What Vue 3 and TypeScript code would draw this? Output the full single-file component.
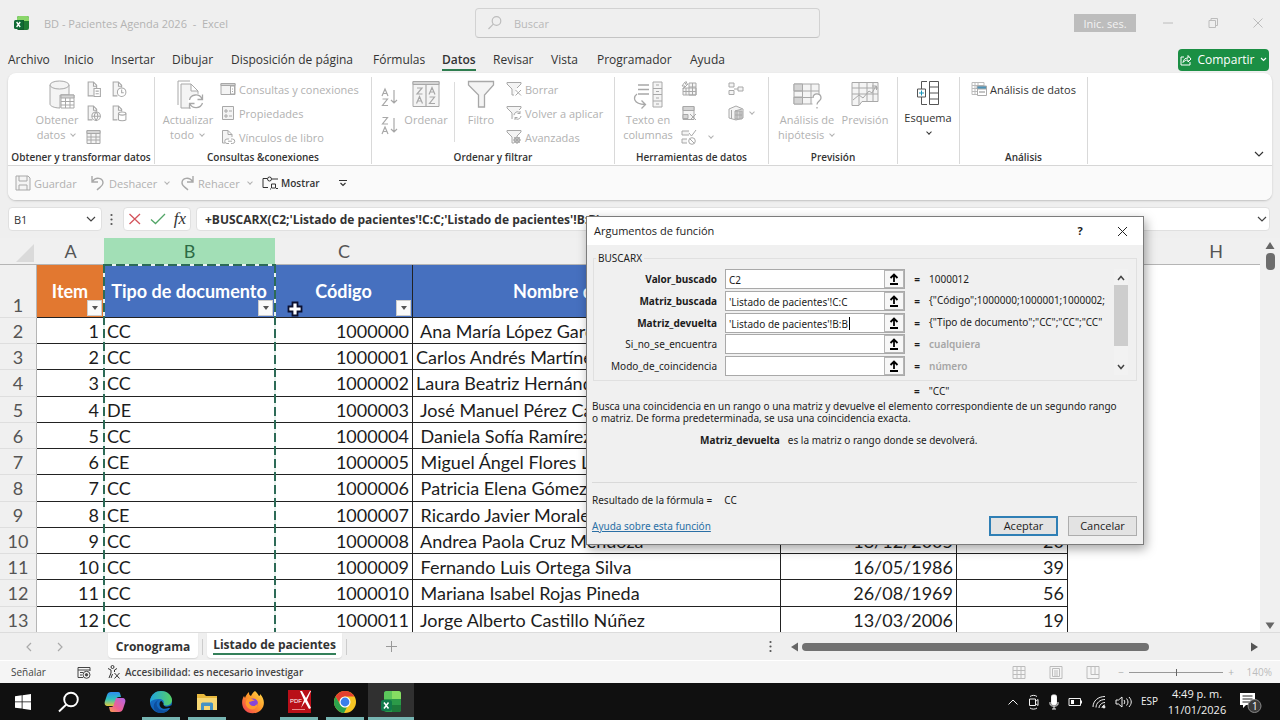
<script setup lang="ts">
import { ref } from 'vue'

interface Patient {
  item: number
  doc: string
  code: number
  name: string
  date: string
  age: string
}

interface Argument {
  id: string
  label: string
  value: string
  result: string
  required: boolean
  hint: boolean
}

const menu = ['Archivo', 'Inicio', 'Insertar', 'Dibujar', 'Disposición de página', 'Fórmulas', 'Datos', 'Revisar', 'Vista', 'Programador', 'Ayuda']
const active = ref('Datos')

const columns = ['A', 'B', 'C', 'D', 'E', 'F', 'G', 'H']

const patients: Patient[] = [
  { item: 1, doc: 'CC', code: 1000000, name: ' Ana María López García', date: '', age: '' },
  { item: 2, doc: 'CC', code: 1000001, name: 'Carlos Andrés Martínez', date: '', age: '' },
  { item: 3, doc: 'CC', code: 1000002, name: 'Laura Beatriz Hernández', date: '', age: '' },
  { item: 4, doc: 'DE', code: 1000003, name: ' José Manuel Pérez Castro', date: '', age: '' },
  { item: 5, doc: 'CC', code: 1000004, name: ' Daniela Sofía Ramírez', date: '', age: '' },
  { item: 6, doc: 'CE', code: 1000005, name: ' Miguel Ángel Flores Luna', date: '', age: '' },
  { item: 7, doc: 'CC', code: 1000006, name: ' Patricia Elena Gómez', date: '', age: '' },
  { item: 8, doc: 'CE', code: 1000007, name: ' Ricardo Javier Morales', date: '', age: '' },
  { item: 9, doc: 'CC', code: 1000008, name: ' Andrea Paola Cruz Mendoza', date: '18/12/2005', age: '20' },
  { item: 10, doc: 'CC', code: 1000009, name: ' Fernando Luis Ortega Silva', date: '16/05/1986', age: '39' },
  { item: 11, doc: 'CC', code: 1000010, name: ' Mariana Isabel Rojas Pineda', date: '26/08/1969', age: '56' },
  { item: 12, doc: 'CC', code: 1000011, name: ' Jorge Alberto Castillo Núñez', date: '13/03/2006', age: '19' },
]

const args = ref<Argument[]>([
  { id: 'arg-valor', label: 'Valor_buscado', value: 'C2', result: '1000012', required: true, hint: false },
  { id: 'arg-buscada', label: 'Matriz_buscada', value: "'Listado de pacientes'!C:C", result: '{"Código";1000000;1000001;1000002;', required: true, hint: false },
  { id: 'arg-devuelta', label: 'Matriz_devuelta', value: "'Listado de pacientes'!B:B", result: '{"Tipo de documento";"CC";"CC";"CC"', required: true, hint: false },
  { id: 'arg-si-no', label: 'Si_no_se_encuentra', value: '', result: 'cualquiera', required: false, hint: true },
  { id: 'arg-modo', label: 'Modo_de_coincidencia', value: '', result: 'número', required: false, hint: true },
])
const current = ref('arg-devuelta')

const cellRef = ref('B1')
const formula = ref("+BUSCARX(C2;'Listado de pacientes'!C:C;'Listado de pacientes'!B:B)")
const zoom = ref(50)
</script>

<template>
  <div class="app">
    <header class="titlebar">
      <div class="doc">
        <svg class="logo" width="16" height="16" viewBox="0 0 16 16">
          <rect x="3" y="1" width="12" height="14" rx="2" fill="#1e7b34" />
          <path d="M5 1h8a2 2 0 0 1 2 2v3H3V3a2 2 0 0 1 2-2z" fill="#8ad66a" />
          <path d="M3 5h7v10H5a2 2 0 0 1-2-2z" fill="#135c2b" />
          <rect x="0" y="5" width="9" height="9" rx="1.5" fill="#0f6b35" />
          <path d="M2.6 7l3.6 5M6.2 7l-3.6 5" stroke="#fff" stroke-width="1.3" />
        </svg>
        <span>BD - Pacientes Agenda 2026&nbsp; -&nbsp; Excel</span>
      </div>
      <label class="search">
        <svg width="16" height="16" viewBox="0 0 16 16" fill="none" stroke="#bdbdbd" stroke-width="1.2">
          <circle cx="9.5" cy="6" r="4.3" /><path d="M6.3 9.2L1.5 14" />
        </svg>
        <input type="text" placeholder="Buscar" aria-label="Buscar" />
      </label>
      <div class="window">
        <button class="signin">Inic. ses.</button>
        <button class="win" aria-label="Minimizar"><svg width="12" height="12" viewBox="0 0 12 12"><path d="M1 6h10" /></svg></button>
        <button class="win" aria-label="Restaurar"><svg width="12" height="12" viewBox="0 0 12 12"><path d="M2 3.500h6.500v7H2zM4 3.500V1.500h6.500v7H8.500" /></svg></button>
        <button class="win" aria-label="Cerrar"><svg width="12" height="12" viewBox="0 0 12 12"><path d="M1.500 1.500l9 9M10.500 1.500l-9 9" /></svg></button>
      </div>
    </header>

    <nav class="menubar">
      <div class="menu">
        <button v-for="m in menu" :key="m" :class="{ on: m === active }" @click="active = m"><span>{{ m }}</span></button>
      </div>
      <button class="share">
        <svg width="12" height="12" viewBox="0 0 12 12" fill="none" stroke="#fff"><path d="M4 3H1v8h9V8M3 8.500c.5-3 2-4.500 5-4.500V1.500L11 5 8 8V6C6 6 4.500 6.500 3 8.500z" /></svg>
        <span>Compartir</span>
        <svg width="7" height="5" viewBox="0 0 7 5" fill="none" stroke="#fff" stroke-width="1.200"><path d="M1 1l2.500 2.500L6 1" /></svg>
      </button>
    </nav>

    <section class="ribbon">
      <div class="groups">
        <div class="group g1">
          <div class="tools">
            <button class="big">
              <svg width="36" height="30" viewBox="-10 0 36 30">
                <path class="f" d="M1 5v19c0 2 4 4 10 4V15h9V5" />
                <ellipse class="f" cx="10.500" cy="5" rx="9.500" ry="4" />
                <path class="w" d="M12 15h13v13H12z" /><path class="d" d="M12 15h13v3H12z" />
                <path class="n" d="M12 21.500h13M12 25h13M16.500 18v10M21 18v10" />
              </svg>
              <span>Obtener<br />datos <i class="chev"></i></span>
            </button>
            <div class="pair">
              <button aria-label="Desde texto"><svg width="16" height="17" viewBox="0 0 15 16"><path class="f" d="M7 14H2V1h5l3 3v3M7 1v4h3" /><path class="w" d="M7.500 7h6v7.500h-6zM9 9.500h3M9 12h3" /></svg></button>
              <button aria-label="Recientes"><svg width="16" height="17" viewBox="0 0 15 16"><path class="f" d="M6 14H2V1h5l3 3v2M7 1v4h3" /><circle class="w" cx="10" cy="10.500" r="4" /><path class="n" d="M10 8v3h2" /></svg></button>
              <button aria-label="Desde web"><svg width="16" height="17" viewBox="0 0 15 16"><path class="f" d="M6 14H2V1h5l3 3v2M7 1v4h3" /><circle class="w" cx="9.500" cy="10.500" r="4" /><path class="n" d="M5.500 10.500h8M9.500 6.500c-2.500 3-2.500 5 0 8c2.500-3 2.500-5 0-8" /></svg></button>
              <button aria-label="Conexiones existentes"><svg width="16" height="17" viewBox="0 0 15 16"><path class="f" d="M6 14H2V1h5l3 3v2M7 1v4h3" /><path class="w" d="M7 8v6c1 1 6 1 7 0V8" /><ellipse class="w" cx="10.500" cy="8" rx="3.500" ry="1.500" /></svg></button>
              <button aria-label="Desde tabla"><svg width="16" height="16" viewBox="0 0 16 16"><path class="f" d="M1 1.500h13v13H1z" /><path class="d" d="M1 1.500h13v3H1z" /><path class="n" d="M1 8h13M1 11h13M5 4v10M10 4v10" /></svg></button>
            </div>
          </div>
          <h2>Obtener y transformar datos</h2>
        </div>
        <div class="group g2">
          <div class="tools">
            <button class="big">
              <svg width="32" height="30" viewBox="-4 0 32 30">
                <path class="n" d="M2 25V1h12" /><path class="f" d="M15 28H5V4h10l7 7v3M15 4v7h7" />
                <circle cx="20" cy="21.500" r="8" fill="#fff" stroke="none" />
                <path class="n" stroke-width="1.300" d="M13.500 20c1-6 10-7 12.500-1M26.500 14.500V19.500h-5M26.500 23c-2 6-10 6-12.500 1M13.500 28.500v-5h5" />
              </svg>
              <span>Actualizar<br />todo <i class="chev"></i></span>
            </button>
            <div class="stack">
              <button><svg width="16" height="16" viewBox="0 0 16 16"><path class="f" d="M1 2.500h14v11H1z" /><path class="d" d="M1 2.500h14v2H1z" /><path class="w" d="M10.500 5h4v8h-4zM12 8h1M12 10.500h1" /></svg>Consultas y conexiones</button>
              <button><svg width="16" height="16" viewBox="0 0 16 16"><path class="f" d="M2.500 1.500h11v13h-11z" /><path class="n" d="M5 5h2v2H5zM5 10h2v2H5zM9 6h3M9 11h3" /></svg>Propiedades</button>
              <button><svg width="16" height="16" viewBox="0 0 16 16"><path class="f" d="M5 14H2.500V1.500H8l4 4V8M8 1.500v4h4" /><path class="w" d="M9 10H7a2 2 0 0 0 0 4.500h2M11 10h1.500a2 2 0 0 1 0 4.500H11M8 12.200h4" /></svg>Vínculos de libro</button>
            </div>
          </div>
          <h2>Consultas &amp;conexiones</h2>
        </div>
        <div class="group g3">
          <div class="tools">
            <div class="sorts">
              <button aria-label="Ordenar de A a Z"><svg width="18" height="20" viewBox="0 0 18 20"><path class="n" stroke-width="1.200" d="M1 9l3-7 3 7M2 6.500h4M1.500 12h5l-5 6.500h5.500M13 3v13M10 13l3 3 3-3" /></svg></button>
              <button aria-label="Ordenar de Z a A"><svg width="18" height="20" viewBox="0 0 18 20"><path class="n" stroke-width="1.200" d="M1.500 1.500h5l-5 6.500h5.500M1 18l3-7 3 7M2 15.500h4M13 2v14M10 13l3 3 3-3" /></svg></button>
            </div>
            <button class="big">
              <svg width="28" height="30" viewBox="0 0 28 30"><path class="f" d="M1 1.500h26v25H1z" /><path class="d" d="M1 1.500h26v3H1z" /><path class="n" stroke-width="1.200" d="M14 5v21M5 8h5l-5 6h5.500M4.500 23.500l3-7 3 7M5.500 21h4M17 14.500l3-7 3 7M18 12h4M17.500 17h5l-5 6.500h5.500" /></svg>
              <span>Ordenar</span>
            </button>
            <div class="rule"></div>
            <button class="big">
              <svg width="28" height="30" viewBox="0 0 28 30"><path class="f" stroke-width="1.300" d="M1.500 1.500h25v3.500L17.500 15v12h-6V15L1.500 5z" /></svg>
              <span>Filtro</span>
            </button>
            <div class="stack">
              <button><svg width="16" height="16" viewBox="0 0 16 16"><path class="f" d="M8 14H6V8L1 3V1.500h14V3l-4 4" /><path class="n" d="M9.500 9l5.500 5.500M15 9l-5.500 5.500" /></svg>Borrar</button>
              <button><svg width="16" height="16" viewBox="0 0 16 16"><path class="f" d="M6 14V8L1 3V1.500h14V3l-2 2" /><path class="n" d="M8 10c1-4 5-4 6-1.500V6M14 8.500h-2.500M15 11c-1 4-5 4-6 1.500V15M9 12.500h2.500" /></svg>Volver a aplicar</button>
              <button><svg width="16" height="16" viewBox="0 0 16 16"><path class="f" d="M8 14H6V8L1 3V1.500h14V3l-4 4" /><circle class="d" cx="11" cy="11" r="2.800" /><path class="n" d="M11 7v8M7 11h8M8.200 8.200l5.600 5.600M13.800 8.200l-5.600 5.600" /></svg>Avanzadas</button>
            </div>
          </div>
          <h2>Ordenar y filtrar</h2>
        </div>
        <div class="group g4">
          <div class="tools">
            <button class="big">
              <svg width="30" height="30" viewBox="0 0 30 30"><path class="n" stroke-width="1.300" d="M5 5h11M5 9.500h11M5 14h11M4 14c-4 3-4 10 8 10.500M8.500 20.500l4 4-4 4" /><path class="f" d="M20 2h9v25h-9zM20 8.500h9M20 14.500h9M20 21h9M23 5h3M23 11.500h3M23 18h3M23 24h3" /></svg>
              <span>Texto en<br />columnas</span>
            </button>
            <div class="stack icons">
              <button aria-label="Relleno rápido"><svg width="16" height="16" viewBox="0 0 16 16"><path class="f" d="M2 7h13v7H2zM8 2h7v12H8z" /><path class="n" d="M2 10.500h13M8 6h7M11.500 2v12M5 7v7M4 1L1 5h3L2 8l5-5H4l2-2z" /></svg></button>
              <button aria-label="Quitar duplicados"><svg width="16" height="16" viewBox="0 0 16 16"><path class="f" d="M2 1.500h11v13H2z" /><path class="d" d="M2 1.500h11v4H2zM2 9.500h5v4H2z" /><path class="w" d="M9 9l6 6M15 9l-6 6" /></svg></button>
              <button aria-label="Validación de datos"><svg width="16" height="16" viewBox="0 0 16 16"><path class="f" d="M6 14H1v-4h5M8 6H1V2h7" /><path class="n" d="M8 4l2.500 3L15 1" /><circle class="w" cx="11" cy="12" r="3.300" /><path class="n" d="M9 10l4 4" /></svg><i class="chev far"></i></button>
            </div>
            <div class="stack icons last">
              <button aria-label="Consolidar"><svg width="16" height="16" viewBox="0 0 16 16"><path class="f" d="M1 2h5v4H1zM1 9.500h5v4H1zM10 6h5v4h-5zM6 8h4" /></svg></button>
              <button aria-label="Modelo de datos"><svg width="16" height="16" viewBox="0 0 16 16"><path class="f" d="M1 4l7-3 7 3v9l-7 2-7-2z" /><path class="d" d="M7 6h7v8H7z" /><path class="n" d="M3.500 5v9M7 6l7-2M9 6v8M12 6v8M7 10h7" /></svg><i class="chev"></i></button>
            </div>
          </div>
          <h2>Herramientas de datos</h2>
        </div>
        <div class="group g5">
          <div class="tools">
            <button class="big">
              <svg width="30" height="30" viewBox="0 0 30 30"><path class="f" d="M2 4h25v20H2z" /><path class="d" d="M2 4h8.500v7H2zM2 17h8.500v7H2z" /><path class="n" d="M2 11h25M2 17.500h25M10.500 4v20M19 4v20" /><path d="M20.500 15h9v14h-9z" fill="#fff" stroke="none" /><path class="n" stroke-width="1.300" d="M21 18c0-6 8-5 8 0 0 3-4 3-4 6.500M25 27v1.500" /></svg>
              <span>Análisis de<br />hipótesis <i class="chev"></i></span>
            </button>
            <button class="big">
              <svg width="30" height="30" viewBox="0 0 30 30"><path class="f" d="M2 2.500h26v19H12l-3 4H2z" /><path class="n" d="M2 8h26M2 14h26M9 2v23M17 2v19M23 2v19M3 20l6-5 4 3 6-7 3 2 4-7M22 6h4.500v4" /></svg>
              <span>Previsión</span>
            </button>
          </div>
          <h2>Previsión</h2>
        </div>
        <div class="group g6 live">
          <div class="tools">
            <button class="big">
              <svg width="28" height="28" viewBox="0 0 28 28"><path class="w" d="M15.500 1.500h9v23h-9zM15.500 7h9M15.500 13h9M15.500 19h9M13 1.500H7.500V9M13 24.500H7.500V17" /><path d="M3.500 9h8v8h-8z" fill="#fff" stroke="#555" /><path d="M5 13h5M7.500 10.500v5" class="teal" /></svg>
              <span>Esquema<br /><i class="chev"></i></span>
            </button>
          </div>
        </div>
        <div class="group g7 live">
          <div class="tools">
            <div class="stack">
              <button><svg width="16" height="16" viewBox="0 0 16 16"><path d="M1 1.500h12v12H1zM1 4.500h12M1 7.500h12M1 10.500h12M4 1.500v12M7 1.500v12" fill="none" stroke="#bbb" /><path d="M6.500 6h9v8.500h-9z" fill="#fff" stroke="#aaa" /><path d="M6 5h9.500v3H6z" fill="#4d93b8" /><path d="M8 11h6" stroke="#888" /></svg>Análisis de datos</button>
            </div>
          </div>
          <h2>Análisis</h2>
        </div>
        <button class="collapse" aria-label="Contraer la cinta"><svg class="dark" width="10" height="6" viewBox="0 0 10 6"><path d="M1 1l4 4 4-4" stroke-width="1.200" /></svg></button>
      </div>
      <div class="quick">
        <button class="q1"><svg width="16" height="16" viewBox="0 0 16 16"><path class="f" d="M1 1h12l2 2v12H1z" /><path class="n" d="M4 1v5h8V1M4 15v-5h8v5" /></svg>Guardar</button>
        <button class="q2"><svg width="16" height="16" viewBox="0 0 16 16"><path class="n" stroke-width="1.400" d="M2 1v6h6M2 7c4-6 11-4 11 1 0 3-3 4-6 7" /></svg>Deshacer <i class="chev"></i></button>
        <button class="q3"><svg width="16" height="16" viewBox="0 0 16 16"><path class="n" stroke-width="1.400" d="M14 1v6H8M14 7C10 1 3 3 3 8c0 3 3 4 6 7" /></svg>Rehacer <i class="chev"></i></button>
        <button class="q4"><svg class="dark" width="16" height="14" viewBox="0 0 16 14"><path d="M5 2.500H1v9h5M10 3h6M8 13h1M14 12.500h2" /><circle cx="7.500" cy="3" r="2" /><path d="M9.500 8h4v4h-4z" /></svg>Mostrar</button>
        <button class="q5" aria-label="Personalizar"><svg class="dark" width="8" height="7" viewBox="0 0 8 7"><path d="M0 .5h8M1.500 3L4 5.500 6.500 3" stroke-width="1.200" /></svg></button>
      </div>
    </section>

    <section class="formulabar">
      <div class="box namebox">
        <input v-model="cellRef" type="text" aria-label="Cuadro de nombres" />
        <svg width="10" height="6" viewBox="0 0 10 6"><path d="M1 1l4 4 4-4" fill="none" stroke="#444" stroke-width="1.200" /></svg>
      </div>
      <svg class="grip" width="3" height="13" viewBox="0 0 3 13" fill="#555"><circle cx="1.500" cy="2" r="1.100" /><circle cx="1.500" cy="6.500" r="1.100" /><circle cx="1.500" cy="11" r="1.100" /></svg>
      <div class="box marks">
        <button aria-label="Cancelar edición"><svg width="14" height="12" viewBox="0 0 14 12"><path d="M1.500 1l10.500 10M12 1L1.500 11" fill="none" stroke="#d4545c" stroke-width="1.300" /></svg></button>
        <button aria-label="Introducir"><svg width="16" height="12" viewBox="0 0 16 12"><path d="M1 6.500l4.500 4L15 1" fill="none" stroke="#52a567" stroke-width="1.300" /></svg></button>
        <button class="fx" aria-label="Insertar función">fx</button>
      </div>
      <div class="box formula">
        <input v-model="formula" type="text" aria-label="Barra de fórmulas" />
        <svg width="10" height="6" viewBox="0 0 10 6"><path d="M1 1l4 4 4-4" fill="none" stroke="#444" stroke-width="1.200" /></svg>
      </div>
    </section>

    <main class="gridarea">
      <div class="sheet">
        <table>
          <colgroup>
            <col class="c0" /><col class="ca" /><col class="cb" /><col class="cc" /><col class="cd" /><col class="ce" /><col class="cf" /><col class="cg" /><col class="ch" />
          </colgroup>
          <thead>
            <tr>
              <th class="corner"><svg width="18" height="18" viewBox="0 0 18 18"><path d="M18 0v18H0z" fill="#dadada" /></svg></th>
              <th v-for="c in columns" :key="c" :class="{ sel: c === 'B' }">{{ c }}</th>
            </tr>
          </thead>
          <tbody>
            <tr class="titles">
              <th>1</th>
              <td class="orange"><div>Item<button class="filter" aria-label="Filtrar Item"></button></div></td>
              <td><div>Tipo de documento<button class="filter" aria-label="Filtrar Tipo de documento"></button></div></td>
              <td><div>Código<button class="filter" aria-label="Filtrar Código"></button></div></td>
              <td><div>Nombre del paciente</div></td>
              <td></td>
              <td></td>
              <td class="void"></td>
              <td class="void"></td>
            </tr>
            <tr v-for="p in patients" :key="p.item" class="row">
              <th>{{ p.item + 1 }}</th>
              <td class="num item">{{ p.item }}</td>
              <td>{{ p.doc }}</td>
              <td class="num">{{ p.code }}</td>
              <td>{{ p.name }}</td>
              <td class="num">{{ p.date }}</td>
              <td class="num">{{ p.age }}</td>
              <td class="void"></td>
              <td class="void"></td>
            </tr>
          </tbody>
        </table>
        <div class="ants"></div>
        <svg class="cursor" width="16" height="16" viewBox="0 0 16 16"><path d="M5.500 1.500h5v4h4v5h-4v4h-5v-4h-4v-5h4z" fill="#fff" stroke="#0b1030" stroke-width="1.800" /></svg>
      </div>
      <div class="vscroll">
        <svg width="10" height="8" viewBox="0 0 10 8"><path d="M5 0l4.500 7h-9z" fill="#666" /></svg>
        <div class="vthumb"></div>
        <svg width="10" height="8" viewBox="0 0 10 8"><path d="M5 7l4.500-6.500h-9z" fill="#666" /></svg>
      </div>
    </main>

    <section class="sheetbar">
      <button class="arrow" aria-label="Hoja anterior"><svg width="6" height="10" viewBox="0 0 6 10"><path d="M5 1L1 5l4 4" /></svg></button>
      <button class="arrow" aria-label="Hoja siguiente"><svg width="6" height="10" viewBox="0 0 6 10"><path d="M1 1l4 4-4 4" /></svg></button>
      <button class="tab">Cronograma</button>
      <i class="sep"></i>
      <button class="tab current"><span>Listado de pacientes</span></button>
      <i class="sep"></i>
      <button class="plus" aria-label="Hoja nueva"><svg width="11" height="11" viewBox="0 0 11 11"><path d="M0 5.500h11M5.500 0v11" stroke="#999" /></svg></button>
      <svg class="grip hgrip" width="3" height="13" viewBox="0 0 3 13" fill="#555"><circle cx="1.500" cy="2" r="1.100" /><circle cx="1.500" cy="6.500" r="1.100" /><circle cx="1.500" cy="11" r="1.100" /></svg>
      <div class="hscroll">
        <svg width="7" height="10" viewBox="0 0 7 10"><path d="M7 .5v9L0 5z" fill="#666" /></svg>
        <div class="track"><div class="hthumb"></div></div>
        <svg width="7" height="10" viewBox="0 0 7 10"><path d="M0 .5v9L7 5z" fill="#555" /></svg>
      </div>
    </section>

    <footer class="status">
      <span class="mode">Señalar</span>
      <svg class="macro" width="14" height="13" viewBox="0 0 14 13" fill="none" stroke="#444"><path d="M6 11.500H1v-10h12V5M1 4h12M3 6.500h3M3 9h2" /><circle cx="9.500" cy="8.800" r="3.500" /><circle cx="9.500" cy="8.800" r="1.200" fill="#444" /></svg>
      <svg width="14" height="14" viewBox="0 0 14 14" fill="none" stroke="#333"><circle cx="5.500" cy="2" r="1.500" /><path d="M1 3.500l3 1.500v3L2 13M10 3.500L7.500 5v2M5.500 9L4 13M7.500 8l5 5.500M12.500 8l-5 5.500" /></svg>
      <b>Accesibilidad: es necesario investigar</b>
      <div class="views">
        <svg width="14" height="13" viewBox="0 0 14 13"><path d="M1 .5h12v12H1zM1 4.500h12M1 8.500h12M5 .5v12M9 .5v12" /></svg>
        <svg width="14" height="13" viewBox="0 0 14 13"><path d="M1 .5h12v12H1zM3.500 2.500h7v8h-7zM5 5h4M5 7h4M5 9h4" /></svg>
        <svg width="14" height="13" viewBox="0 0 14 13"><path d="M1 .5h12v12H1zM5 .5v8h4v-8M9 8.500h4" /></svg>
      </div>
      <span class="pm">−</span>
      <input v-model="zoom" class="zoom" type="range" min="0" max="100" aria-label="Zoom" />
      <span class="pm">+</span>
      <span class="pct">140%</span>
    </footer>

    <footer class="taskbar">
      <button aria-label="Inicio"><svg width="16" height="16" viewBox="0 0 16 16" fill="#fff"><path d="M0 2.200L6.700 1.300V7.500H0zM7.500 1.200L16 0v7.500H7.500zM0 8.300h6.700v6.300L0 13.700zM7.500 8.300H16V16l-8.500-1.200z" /></svg></button>
      <button aria-label="Buscar en Windows"><svg width="22" height="22" viewBox="0 0 22 22" fill="none" stroke="#fff" stroke-width="1.900"><circle cx="13" cy="8.500" r="6.800" /><path d="M8.300 13.500L1 20.500" /></svg></button>
      <button aria-label="Copilot">
        <svg width="22" height="22" viewBox="0 0 22 22">
          <defs>
            <linearGradient id="cpa" x1="0" y1="0" x2="0" y2="1"><stop offset="0" stop-color="#2f8cf0" /><stop offset=".5" stop-color="#2cc3c0" /><stop offset="1" stop-color="#e3c83c" /></linearGradient>
            <linearGradient id="cpb" x1="1" y1="0" x2="0" y2="1"><stop offset="0" stop-color="#b065e8" /><stop offset=".6" stop-color="#ef5f92" /><stop offset="1" stop-color="#f6a24a" /></linearGradient>
          </defs>
          <path d="M7 1h7c2 0 2 1 2.500 3l.5 2h-2c-2 0-2.500 1-3 3l-2 6H4c-3 0-4-2-3-5l2-6c.6-2 2-3 4-3z" fill="url(#cpa)" />
          <path d="M15 21H8c-2 0-2-1-2.500-3L5 16h2c2 0 2.500-1 3-3l2-6h6c3 0 4 2 3 5l-2 6c-.6 2-2 3-4 3z" fill="url(#cpb)" />
        </svg>
      </button>
      <button class="open" aria-label="Edge">
        <svg width="24" height="24" viewBox="0 0 24 24">
          <defs><linearGradient id="eg" x1="0" y1="0" x2="1" y2="0"><stop offset="0" stop-color="#1fa3e0" /><stop offset="1" stop-color="#57d163" /></linearGradient></defs>
          <circle cx="12" cy="12" r="11" fill="#1469c0" />
          <path d="M1 11C2 4 7 1 12 1c7 0 11 5 11 9 0 4-3 5.500-6 5.500-2.500 0-3-1-2.500-2 1-2-.5-4.500-4-4.500C6 9 2 10 1 13z" fill="url(#eg)" />
          <path d="M10.500 9.500C8 11 7 13 8 16c1.500 4 6 5.500 11.500 3.500C17 22.500 13 24 9 22.500 3 20 3 12 10.500 9.500z" fill="#0d4f9e" />
          <path d="M14.500 13.500c-1 3 4 4.500 8 1.500l1 3h-4c-5 2-9 0-9-4 0-2 1-3 2-3z" fill="#101010" />
        </svg>
      </button>
      <button class="open" aria-label="Explorador">
        <svg width="22" height="20" viewBox="0 0 22 20"><path d="M1 2h7l2 2h11v14H1z" fill="#e9b93d" /><path d="M1 6h20v12H1z" fill="#f7d774" /><path d="M5 18v-6c0-1 1-1.500 2-1.500h8c1 0 2 .5 2 1.500v6h-3v-4H8v4z" fill="#4592c4" /></svg>
      </button>
      <button aria-label="Firefox">
        <svg width="24" height="24" viewBox="0 0 24 24">
          <defs><linearGradient id="ff" x1="1" y1="0" x2="0" y2="1"><stop offset="0" stop-color="#ffe14a" /><stop offset=".5" stop-color="#ff9328" /><stop offset="1" stop-color="#f0325c" /></linearGradient></defs>
          <path d="M14 1c2 2 3 3 4 5 1 0 1-1 1-2 5 5 5 12 1 16-5 5-14 4-17-1C0 14 1 9 3 6l1 2c1-3 2-4 4-6 0 2 0 3 2 4 1-2 2-4 4-5z" fill="url(#ff)" />
          <circle cx="12" cy="13.500" r="5" fill="#8846d8" /><path d="M6 9c3-1 6 0 8 2-3-1-4 1-6 1 0 4 6 6 9 1 0 6-6 8-10 5-3-3-3-6-1-9z" fill="#ff9a2c" />
        </svg>
      </button>
      <button class="open" aria-label="PDF-XChange">
        <svg width="23" height="23" viewBox="0 0 23 23"><path d="M0 0h23v23H0z" fill="#b90f18" /><path d="M12 1h2l4 7 4-7h1l-4 9 4 8-2 1-4-7-4 6 3-8z" fill="#fff" /><text x="2" y="13" font-size="6" fill="#fff" font-family="Liberation Sans, sans-serif">PDF</text><path d="M4 19.500h13" stroke="#e98a8a" /></svg>
      </button>
      <button class="open" aria-label="Chrome">
        <svg width="24" height="24" viewBox="0 0 24 24"><circle cx="12" cy="12" r="11" fill="#f6c623" /><path d="M2.500 6.500A11 11 0 0 1 21.500 6.500H12a5.500 5.500 0 0 0-4.800 8z" fill="#e3402f" /><path d="M2.500 6.500l4.800 8.300A5.500 5.500 0 0 0 14 17l-3 6A11 11 0 0 1 2.500 6.500z" fill="#2ba24c" /><circle cx="12" cy="12" r="5.500" fill="#fff" /><circle cx="12" cy="12" r="4.400" fill="#3c7fea" /></svg>
      </button>
      <button class="open here" aria-label="Excel">
        <svg width="22" height="22" viewBox="0 0 22 22"><rect x="4" y="0" width="17" height="21" rx="2.500" fill="#2b9a48" /><path d="M6.500 0H12v8H4V2.500A2.500 2.500 0 0 1 6.500 0z" fill="#5cc65b" /><path d="M12 0h6.500A2.500 2.500 0 0 1 21 2.500V8h-9z" fill="#86dd62" /><path d="M12 14h9v4.500a2.500 2.500 0 0 1-2.500 2.500H12z" fill="#1d7a3a" /><rect x="1" y="9" width="11" height="11" rx="2" fill="#117a4b" /><path d="M4 11.500l4.500 6M8.500 11.500l-4.500 6" stroke="#fff" stroke-width="1.500" /></svg>
      </button>
      <div class="tray">
        <svg width="12" height="8" viewBox="0 0 12 8"><path d="M1.500 6.500L6 2l4.500 4.500" /></svg>
        <svg width="12" height="16" viewBox="0 0 12 16"><path d="M1.500 5h6v6.500h-6zM7.500 7.500l2.500-2v6l-2.500-2M2 2.500c2-1.500 5-1.500 7 0M2 14c2 1.500 5 1.500 7 0" /></svg>
        <svg width="10" height="16" viewBox="0 0 10 16"><rect x="2.500" y="1" width="5" height="10" rx="1.500" fill="#fff" /><path d="M1 8v2c0 3 8 3 8 0V8M5 12.500V15M3 15h4" /></svg>
        <svg width="15" height="10" viewBox="0 0 15 10"><path d="M1 1.500h11.500v7H1zM13.500 3.500v3" /><path d="M3 3h3v4H3z" fill="#fff" stroke="none" /></svg>
        <svg width="14" height="14" viewBox="0 0 14 14"><path d="M1 12C1 6 6 1.500 13 1.500M4 12.500C4 8 8 4.500 13 4.500M7 13c0-3 3-5.500 6-5.500M10 13c0-1.500 1.500-3 3-3" /><circle cx="12" cy="12" r="1" fill="#fff" /></svg>
        <svg width="17" height="14" viewBox="0 0 17 14"><path d="M1 5h2.500l3.500-3v10L3.500 9H1zM9 5c1 1.500 1 2.500 0 4M11.500 3.500c2 2.500 2 4.500 0 7M14 2c3 3.500 3 6.500 0 10" /></svg>
        <span>ESP</span>
        <span class="clock">4:49 p. m.<br />11/01/2026</span>
        <svg width="24" height="24" viewBox="0 0 24 24"><path d="M2 3h15v12h-9l-3 3v-3H2z" fill="#fff" stroke="none" /><path d="M4.500 6h10M4.500 9h10M4.500 12h7" stroke="#222" /><circle cx="16.500" cy="16" r="6.500" fill="#3b3b3b" stroke="#888" /><text x="14" y="20" font-size="10" fill="#fff" stroke="none" font-family="Open Sans, sans-serif">1</text></svg>
      </div>
    </footer>

    <div class="dialog" role="dialog" aria-labelledby="dlg-title">
      <div class="dlg-title">
        <span id="dlg-title">Argumentos de función</span>
        <button aria-label="Ayuda"><b>?</b></button>
        <button aria-label="Cerrar cuadro"><svg width="11" height="11" viewBox="0 0 11 11"><path d="M1 1l9 9M10 1l-9 9" stroke="#222" /></svg></button>
      </div>
      <fieldset>
        <legend>BUSCARX</legend>
        <div class="args">
          <div v-for="a in args" :key="a.id" class="arg">
            <label :for="a.id" :class="{ req: a.required }">{{ a.label }}</label>
            <div class="field">
              <input :id="a.id" v-model="a.value" type="text" @focus="current = a.id" />
              <i v-if="a.id === current" class="caret"></i>
              <button :aria-label="'Contraer ' + a.label"><svg width="10" height="12" viewBox="0 0 10 12"><path d="M5 9V2M1.500 5L5 1.500 8.500 5M1 11h8" fill="none" stroke="#000" stroke-width="1.800" /></svg></button>
            </div>
            <b>=</b>
            <span class="res" :class="{ hint: a.hint }">{{ a.result }}</span>
          </div>
        </div>
        <div class="dscroll">
          <svg width="8" height="6" viewBox="0 0 8 6"><path d="M1 5l3-3.500L7 5" /></svg>
          <div class="dthumb"></div>
          <svg width="8" height="6" viewBox="0 0 8 6"><path d="M1 1l3 3.500L7 1" /></svg>
        </div>
      </fieldset>
      <div class="outcome"><b>=</b><span>"CC"</span></div>
      <p class="desc">Busca una coincidencia en un rango o una matriz y devuelve el elemento correspondiente de un segundo rango o&nbsp;matriz. De forma predeterminada, se usa una coincidencia exacta.</p>
      <p class="argdesc"><b>Matriz_devuelta</b><span>es la matriz o rango donde se devolverá.</span></p>
      <div class="dlg-foot">
        <p>Resultado de la fórmula =<span>CC</span></p>
        <div class="actions">
          <a href="#">Ayuda sobre esta función</a>
          <button class="primary">Aceptar</button>
          <button>Cancelar</button>
        </div>
      </div>
    </div>
  </div>
</template>

<style>
body { margin: 0; background: #f0f0f0; }
</style>

<style scoped>
* { box-sizing: border-box; }
.app { position: relative; display: flex; flex-direction: column; height: 100vh; overflow: hidden; background: #efefef; color: #333; font-family: "Open Sans", "Noto Sans", sans-serif; font-size: 12px; line-height: 15px; }
button { margin: 0; padding: 0; border: 0; background: none; font: inherit; color: inherit; white-space: nowrap; }
input { min-width: 0; margin: 0; padding: 0; border: 0; outline: 0; background: none; font: inherit; color: inherit; }
svg { flex: none; display: block; }
p, h2 { margin: 0; }

.titlebar { display: grid; grid-template-columns: minmax(0, 475fr) 345px minmax(0, 460fr); align-items: center; height: 46px; flex: none; color: #b3b3b3; }
.doc { display: flex; align-items: center; gap: 14px; padding-left: 14px; font-size: 11px; }
.search { display: flex; align-items: center; gap: 11px; height: 30px; padding: 0 11px; border: 1px solid #d2d2d2; border-bottom-color: #c4c4c4; border-radius: 4px; }
.search input { flex: 1; font-size: 11px; }
.search input::placeholder { color: #b9b9b9; opacity: 1; }
.window { display: flex; align-items: center; justify-content: flex-end; }
.signin { width: 62px; height: 18px; margin-right: 9px; background: #bdbdbd; color: #f3f3f3; font-size: 11px; }
.win { display: grid; place-items: center; width: 45px; height: 30px; }
.win svg { fill: none; stroke: #bcbcbc; }

.menubar { display: flex; align-items: center; justify-content: space-between; height: 27px; padding: 0 11px 0 8px; flex: none; }
.menu { display: grid; grid-template-columns: 56px 47px 61px 59px 142px 69px 51px 58px 46px 93px 50px; }
.menu button { text-align: left; height: 24px; }
.menu span { display: inline-block; height: 22px; line-height: 22px; border-bottom: 2px solid transparent; }
.menu .on span { border-color: #2e7d4f; font-weight: 600; }
.share { display: flex; align-items: center; justify-content: center; gap: 5px; width: 91px; height: 22px; border-radius: 4px; background: #1b8f44; color: #fff; }

.ribbon { flex: none; margin: 0 8px; border-radius: 8px; background: #fff; box-shadow: 0 1px 2px #c0c0c0; overflow: hidden; color: #b1b1b1; font-size: 11px; }
.ribbon svg { stroke: #a8a8a8; fill: none; }
.ribbon svg.dark { stroke: #333; }
.ribbon .f { fill: #f4f4f4; }
.ribbon .w { fill: #fff; }
.ribbon .d { fill: #d4d4d4; }
.groups { display: flex; height: 93px; border-bottom: 1px solid #d6d6d6; }
.group { display: flex; flex-direction: column; justify-content: space-between; flex: none; margin: 4px 0 1px; border-right: 1px solid #d9d9d9; }
.g1 { width: 147px; } .g2 { width: 217px; } .g3 { width: 243px; } .g4 { width: 154px; } .g5 { width: 129px; } .g6 { width: 62px; } .g7 { width: 128px; }
.live { color: #333; }
.ribbon .g6 svg { stroke: #555; }
.ribbon .teal { stroke: #1593b8; }
.tools { display: flex; height: 72px; }
.group h2 { color: #333; font-size: 10px; font-weight: 600; line-height: 14px; text-align: center; white-space: nowrap; }
.big { display: flex; flex-direction: column; align-items: center; gap: 2px; width: 52px; padding-top: 3px; }
.chev { display: inline-block; width: 4px; height: 4px; margin: 0 2px 3px 3px; border-right: 1px solid currentColor; border-bottom: 1px solid currentColor; transform: rotate(45deg); }
.g1 .tools { padding-left: 23px; }
.pair { display: grid; grid-template-columns: 25px 25px; grid-auto-rows: 24px; margin-left: 3px; }
.pair button { display: flex; align-items: center; }
.stack { display: grid; grid-auto-rows: 24px; }
.stack button { display: flex; align-items: center; gap: 3px; }
.g2 .tools { padding-left: 7px; gap: 6px; }
.g3 .tools { padding-left: 9px; }
.sorts { display: grid; grid-auto-rows: 29px; align-content: start; padding-top: 5px; margin-right: 1px; }
.rule { width: 1px; height: 60px; margin: 5px 0 0 2px; background: #dcdcdc; }
.g3 .stack { margin-left: -1px; }
.g4 .tools { padding-left: 7px; }
.g4 .stack { width: 47px; }
.g4 .icons { margin-left: 7px; }
.g4 .last { margin-left: 0; width: 32px; }
.far { margin-left: 9px; }
.g5 .tools { padding-left: 8px; }
.g5 .big { width: 60px; }
.g5 .big + .big { width: 56px; }
.g6 .tools { padding-left: 4px; }
.g7 .tools { padding-left: 11px; }
.collapse { margin: auto 8px 8px auto; }
.quick { display: flex; align-items: center; height: 34px; padding-left: 7px; background: #fafafa; }
.quick button { display: flex; align-items: center; gap: 3px; }
.q1 { width: 75px; } .q2 { width: 89px; } .q3 { width: 83px; } .quick .q4 { width: 77px; color: #333; font-size: 10px; font-weight: 600; }
.quick .chev { margin-left: 5px; }

.formulabar { display: flex; align-items: center; height: 38px; flex: none; padding: 0 10px 0 8px; }
.box { display: flex; align-items: center; height: 24px; border: 1px solid #e0e0e0; border-radius: 4px; background: #fff; }
.namebox { width: 94px; padding: 0 5px; }
.namebox input { flex: 1; font-size: 11px; }
.grip { margin: 0 10px 0 8px; }
.marks { width: 68px; justify-content: space-between; padding: 0 4px; margin-right: 5px; }
.fx { font: italic 17px/20px "Liberation Serif", serif; }
.formula { flex: 1; padding: 0 2px 0 8px; }
.formula input { flex: 1; font-weight: 700; }

.gridarea { display: flex; flex: 1; min-height: 0; overflow: hidden; }
.sheet { position: relative; flex: 1; min-width: 0; overflow: hidden; background: #fff; }
table { width: 100%; min-width: 1260px; table-layout: fixed; border-collapse: separate; border-spacing: 0; font-family: Lato, Carlito, sans-serif; font-size: 18px; line-height: 20px; color: #1c1c1c; }
.c0 { width: 37px; } .ca { width: 67px; } .cb { width: 171px; } .cc { width: 138px; } .cd { width: 368px; } .ce { width: 176px; } .cf { width: 111px; } .cg { width: 104px; }
th { padding: 0; background: #f0f0f0; color: #555; font-weight: 400; }
thead th { height: 27px; border-bottom: 1px solid #b5b5b5; }
thead .sel { background: #a2dfb6; color: #2d6b45; }
.corner svg { margin: 3px 0 0 16px; }
tbody th { border-right: 1px solid #b5b5b5; border-bottom: 1px solid #dedede; }
td { padding: 0 3px; border-right: 1px solid #222; border-bottom: 1px solid #222; overflow: hidden; white-space: pre; }
.row { height: 26px; }
.row:nth-child(4n) { height: 27px; }
.titles th { height: 53px; vertical-align: bottom; padding-bottom: 2px; }
.titles td { padding: 0; background: #4670bf; color: #fff; font-weight: 700; text-align: center; }
.titles td.orange { background: #e27830; }
.titles td > div { display: grid; place-items: center; height: 52px; position: relative; }
.filter { position: absolute; right: 1px; bottom: 1px; width: 15px; height: 16px; background: #fafafa; border: 1px solid #ccc; display: grid; place-items: center; }
.filter::after { content: ""; border: 3px solid transparent; border-top: 4px solid #555; border-bottom: 0; }
.num { text-align: right; }
.item { padding-right: 4px; }
td.void, .titles td.void { border: 0; background: #fff; }
.ants { position: absolute; left: 103px; top: 26px; width: 173px; bottom: 0; background: repeating-linear-gradient(180deg, #2d6b57 0 9px, #e8f2ee 9px 13px) left / 2px 100% no-repeat, repeating-linear-gradient(180deg, #2d6b57 0 9px, #e8f2ee 9px 13px) right / 2px 100% no-repeat, repeating-linear-gradient(90deg, #2d6b57 0 9px, #e8f2ee 9px 13px) top / 100% 2px no-repeat; pointer-events: none; }
.cursor { position: absolute; left: 287px; top: 63px; }
.vscroll { display: flex; flex-direction: column; align-items: center; width: 20px; padding: 4px 0 2px; background: #f0f0f0; }
.vthumb { width: 9px; height: 17px; margin: 3px 0 auto; border-radius: 4px; background: #6d6d6d; }

.sheetbar { display: flex; align-items: center; height: 28px; flex: none; padding: 0 22px 0 26px; border-top: 1px solid #dcdcdc; }
.arrow { width: 31px; }
.arrow svg { fill: none; stroke: #aaa; stroke-width: 1.2; }
.tab { align-self: flex-start; height: 25px; width: 90px; margin-left: 20px; border-radius: 0 0 4px 4px; background: #fff; font-weight: 700; line-height: 27px; box-shadow: 0 1px 1px #d8d8d8; }
.sep { width: 1px; height: 16px; margin: 0 4px; background: #ccc; }
.sep + .tab { margin-left: 0; }
.tab.current { width: 135px; }
.current span { display: inline-block; height: 22px; line-height: 23px; border-bottom: 2px solid #34805a; vertical-align: top; }
.plus { width: 80px; display: grid; place-items: center; }
.hgrip { margin: 0 19px 0 auto; }
.hscroll { display: flex; align-items: center; gap: 4px; flex: 0 1 467px; }
.track { flex: 1; height: 8px; }
.hthumb { width: 78%; height: 8px; border-radius: 4px; background: #717171; }

.status { display: flex; align-items: center; height: 23px; flex: none; padding: 0 8px 0 11px; background: #f5f5f5; border-top: 1px solid #fff; font-size: 10px; color: #444; }
.mode { width: 66px; }
.macro { margin-right: 16px; }
.status b { margin-left: 4px; font-weight: 600; }
.views { display: flex; gap: 23px; margin: 0 17px 0 auto; }
.views svg { fill: none; stroke: #bcbcbc; }
.pm { color: #b0b0b0; width: 8px; text-align: center; }
.zoom { width: 94px; height: 12px; margin: 0 4px; appearance: none; background: linear-gradient(#999, #999) center / 100% 1px no-repeat; }
.zoom::-webkit-slider-thumb { appearance: none; width: 1px; height: 7px; background: #666; }
.pct { width: 37px; text-align: right; color: #bcbcbc; }

.taskbar { display: flex; height: 37px; flex: none; background: #101010; color: #f1f1f1; font-size: 11px; }
.taskbar > button { display: grid; place-items: center; width: 46px; border-bottom: 3px solid transparent; border-top: 3px solid transparent; }
.taskbar > .open { background: linear-gradient(#76b5b2, #76b5b2) bottom / 38px 3px no-repeat border-box; }
.taskbar > .here { background: linear-gradient(#76b5b2, #76b5b2) bottom / 100% 3px no-repeat border-box, #303030; }
.tray { display: flex; align-items: center; gap: 9px; margin-left: auto; padding-right: 18px; }
.tray svg { fill: none; stroke: #f1f1f1; }
.tray span { font-size: 10px; }
.tray .clock { width: 60px; margin-right: 2px; text-align: center; line-height: 16px; white-space: nowrap; font-size: 11px; }

.dialog { position: absolute; left: 586px; top: 216px; width: 558px; height: 329px; display: flex; flex-direction: column; border: 1px solid #7c7c7c; background: #f0f0f0; box-shadow: 2px 4px 10px rgba(0, 0, 0, .35); color: #1c1c1c; font-family: "Noto Sans", "Open Sans", sans-serif; font-size: 10px; line-height: 12px; }
.dlg-title { display: flex; align-items: center; height: 28px; padding: 0 0 0 7px; background: #fff; font-family: "Open Sans", sans-serif; font-size: 11px; }
.dlg-title span { flex: 1; }
.dlg-title button { display: grid; place-items: center; width: 42px; height: 28px; }
fieldset { display: flex; height: 130px; margin: 6px 6px 0; padding: 4px 8px 0 0; border: 1px solid #e0e0e0; min-width: 0; }
legend { margin-left: 2px; padding: 0 2px; line-height: 14px; }
.args { display: flex; flex: 1; flex-direction: column; justify-content: space-between; height: 107px; min-width: 0; }
.arg { display: flex; align-items: center; height: 20px; }
.arg label { width: 123px; text-align: right; white-space: nowrap; }
.req { font-weight: 700; }
.field { position: relative; display: flex; width: 180px; height: 20px; margin-left: 8px; border: 1px solid #a9a9a9; background: #fff; }
.field input { flex: 1; padding: 2px 0 0 3px; }
.caret { position: absolute; left: 123px; top: 3px; width: 1px; height: 13px; background: #000; }
.field button { display: grid; place-items: center; width: 20px; border: 1px solid #b5b5b5; background: #f7f7f7; }
.arg > b { width: 24px; text-align: center; }
.res { width: 180px; white-space: nowrap; line-height: 15px; }
.hint { color: #a6a6a6; font-weight: 600; }
.dscroll { display: flex; flex-direction: column; align-items: center; width: 14px; height: 106px; padding: 6px 0 5px; background: #f2f2f2; }
.dscroll svg { fill: none; stroke: #444; stroke-width: 1.500; }
.dthumb { width: 14px; height: 61px; margin: 4px 0 auto; background: #cdcdcd; }
.outcome { display: flex; gap: 9px; margin: 3px 0 2px 327px; line-height: 14px; }
.desc { padding: 0 16px 0 5px; }
.argdesc { display: flex; gap: 8px; margin: 10px 0 0 113px; }
.dlg-foot { margin: auto 6px 8px 5px; padding-top: 11px; border-top: 1px solid #d9d9d9; }
.dlg-foot p span { margin-left: 12px; }
.actions { display: flex; align-items: center; gap: 10px; margin-top: 10px; }
.actions a { margin-right: auto; color: #2a6fa5; line-height: 14px; }
.actions button { width: 69px; height: 20px; border: 1px solid #adadad; background: #e3e3e3; font-family: "Open Sans", sans-serif; font-size: 11px; }
.actions .primary { border: 2px solid #2f7fb5; }
</style>
